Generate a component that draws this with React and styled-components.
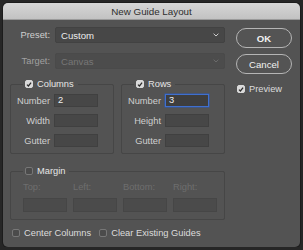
import React from 'react';
import styled, {createGlobalStyle} from 'styled-components';

const GlobalStyle = createGlobalStyle`
	html, body {
		margin: 0;
		padding: 0;
		background: #262626;
	}
	body {
		font-family: "Liberation Sans", Arial, sans-serif;
		font-size: 9.3px;
		color: #e2e2e2;
	}
`

function Check({checked}) {
	return (
		<CheckBox $checked={checked}>
			{checked && (
				<svg width="7" height="7" viewBox="0 0 8 8">
					<path d="M1.3 4.2 L3.2 6 L6.8 1.6" fill="none" stroke="#2c2c2c" strokeWidth="1.7"/>
				</svg>
			)}
		</CheckBox>
	)
}

function Chevron({dim}) {
	return (
		<svg width="6" height="4" viewBox="0 0 6 4">
			<path d="M0.6 0.7 L3 3 L5.4 0.7" fill="none" stroke={dim ? '#6c6c6c' : '#cfcfcf'} strokeWidth="1"/>
		</svg>
	)
}

export default function App() {
	return (
		<>
			<GlobalStyle/>
			<Window>
				<TitleBar>New Guide Layout</TitleBar>
				<Body>
					<Main>
						<FieldRow>
							<FieldLabel>Preset:</FieldLabel>
							<Select>
								<span>Custom</span>
								<Chevron/>
							</Select>
						</FieldRow>
						<FieldRow>
							<FieldLabel $dim>Target:</FieldLabel>
							<Select $disabled>
								<span>Canvas</span>
								<Chevron dim/>
							</Select>
						</FieldRow>
						<Groups>
							<Group $width="104px">
								<Legend><Check checked/>Columns</Legend>
								<InputRow><InputLabel>Number</InputLabel><Input>2</Input></InputRow>
								<InputRow><InputLabel>Width</InputLabel><Input/></InputRow>
								<InputRow><InputLabel>Gutter</InputLabel><Input/></InputRow>
							</Group>
							<Group $width="104px">
								<Legend><Check checked/>Rows</Legend>
								<InputRow><InputLabel>Number</InputLabel><Input $focused>3</Input></InputRow>
								<InputRow><InputLabel>Height</InputLabel><Input/></InputRow>
								<InputRow><InputLabel>Gutter</InputLabel><Input/></InputRow>
							</Group>
						</Groups>
						<MarginGroup>
							<Legend><Check/>Margin</Legend>
							<MarginGrid>
								{['Top:', 'Left:', 'Bottom:', 'Right:'].map(l => (
									<MarginCell key={l}>
										<DimLabel>{l}</DimLabel>
										<MarginInput/>
									</MarginCell>
								))}
							</MarginGrid>
						</MarginGroup>
						<BottomRow>
							<CheckLabel><Check/>Center Columns</CheckLabel>
							<CheckLabel><Check/>Clear Existing Guides</CheckLabel>
						</BottomRow>
					</Main>
					<Side>
						<Button $primary>OK</Button>
						<Button>Cancel</Button>
						<PreviewLabel><Check checked/>Preview</PreviewLabel>
					</Side>
				</Body>
			</Window>
		</>
	)
}

const Window = styled.div`
	margin: 3px 3px 0 3px;
	width: 297px;
	height: 244px;
	border-radius: 5px;
	background: #535353;
	overflow: hidden;
	box-shadow: 0 0 0 1px #1c1c1c;
	display: flex;
	flex-direction: column;
`

const TitleBar = styled.div`
	height: 16px;
	flex: none;
	display: flex;
	align-items: center;
	justify-content: center;
	background: linear-gradient(#d6d6d6, #c2c2c2);
	border-bottom: 1px solid #9a9a9a;
	color: #2e2e2e;
	font-size: 9.8px;
`

const Body = styled.div`
	display: flex;
	padding: 7px 8px 0 7px;
	gap: 11px;
`

const Main = styled.div`
	width: 215px;
	display: flex;
	flex-direction: column;
`

const FieldRow = styled.div`
	display: flex;
	align-items: center;
	height: 16px;
	margin-bottom: 10px;
`

const FieldLabel = styled.div`
	width: 40px;
	text-align: right;
	margin-right: 5px;
	color: ${p => p.$dim ? '#a0a0a0' : '#cfcfcf'};
`

const Select = styled.div`
	flex: 1;
	height: 16px;
	box-sizing: border-box;
	display: flex;
	align-items: center;
	justify-content: space-between;
	padding: 0 5px 0 5px;
	background: ${p => p.$disabled ? '#4c4c4c' : '#474747'};
	border: 1px solid ${p => p.$disabled ? '#4a4a4a' : '#424242'};
	border-radius: 2px;
	color: ${p => p.$disabled ? '#777' : '#ececec'};
	font-size: 9.6px;
`

const Groups = styled.div`
	display: flex;
	gap: 7px;
	margin-top: -1px;
`

const Group = styled.fieldset`
	margin: 0;
	min-width: 0;
	width: ${p => p.$width};
	box-sizing: border-box;
	border: 1px solid #464646;
	border-radius: 2px;
	padding: 4px 0 6px 0;
	display: flex;
	flex-direction: column;
	gap: 7px;
`

const Legend = styled.legend`
	margin-left: 12px;
	padding: 0 4px 0 2px;
	display: flex;
	align-items: center;
	gap: 4px;
	height: 12px;
	color: #e6e6e6;
`

const InputRow = styled.div`
	display: flex;
	align-items: center;
`

const InputLabel = styled.div`
	width: 39px;
	text-align: right;
	margin-right: 4px;
	color: #cfcfcf;
`

const Input = styled.div`
	width: 44px;
	height: 13px;
	box-sizing: border-box;
	background: ${p => p.$focused ? '#3e3e3e' : '#474747'};
	border: 1px solid ${p => p.$focused ? '#3f6fcf' : '#404040'};
	box-shadow: ${p => p.$focused ? '0 0 0 0.5px #2f5bb0' : 'none'};
	padding: 0 3px;
	line-height: 11px;
	color: #f0f0f0;
`

const MarginGroup = styled(Group)`
	width: 215px;
	margin-top: 11px;
	padding: 5px 0 7px 0;
`

const MarginGrid = styled.div`
	display: grid;
	grid-template-columns: repeat(4, 44px);
	gap: 6px;
	padding: 0 7px 0 12px;
`

const MarginCell = styled.div`
	display: flex;
	flex-direction: column;
	gap: 6px;
`

const DimLabel = styled.div`
	color: #6e6e6e;
`

const MarginInput = styled.div`
	height: 14px;
	box-sizing: border-box;
	background: #4b4b4b;
	border: 1px solid #464646;
`

const BottomRow = styled.div`
	display: flex;
	gap: 8px;
	margin-top: 8px;
	margin-left: 2px;
`

const CheckLabel = styled.div`
	display: flex;
	align-items: center;
	gap: 4px;
	color: #dcdcdc;
`

const CheckBox = styled.span`
	width: 8px;
	height: 8px;
	box-sizing: border-box;
	border-radius: 2px;
	display: inline-flex;
	align-items: center;
	justify-content: center;
	background: ${p => p.$checked ? '#dadada' : '#4b4b4b'};
	border: 1px solid ${p => p.$checked ? '#dadada' : '#777'};
`

const Side = styled.div`
	width: 56px;
	display: flex;
	flex-direction: column;
	gap: 6px;
	padding-top: 1px;
`

const Button = styled.div`
	height: 20px;
	box-sizing: border-box;
	border-radius: 10px;
	border: 1px solid #b5b5b5;
	background: #545454;
	display: flex;
	align-items: center;
	justify-content: center;
	color: #f2f2f2;
	font-size: 9.6px;
	font-weight: ${p => p.$primary ? 'bold' : 'normal'};
`

const PreviewLabel = styled(CheckLabel)`
	margin-top: 4px;
	margin-left: 1px;
`
